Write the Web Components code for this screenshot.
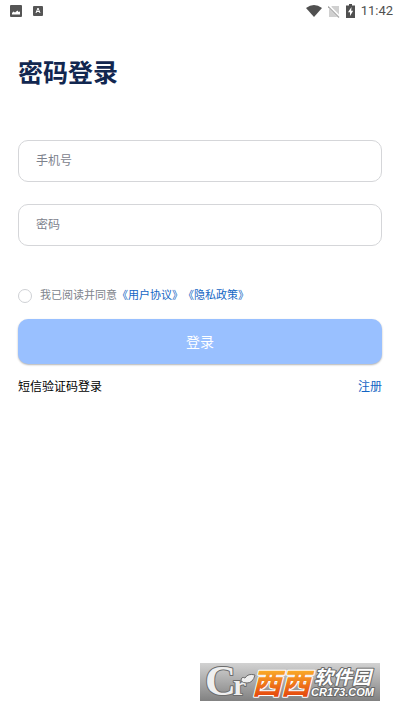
<!DOCTYPE html>
<html lang="zh-CN">
<head>
<meta charset="utf-8">
<meta name="viewport" content="width=device-width, initial-scale=1">
<title>密码登录</title>
<style>
html, body { margin: 0; height: 100%; background: #fff; font-family: Roboto, "Noto Sans CJK SC", sans-serif; }
</style>
</head>
<body>
<login-page></login-page>
<script>
const define = (name, html, setup) => customElements.define(name, class extends HTMLElement {
  constructor() {
    super();
    const t = document.createElement('template');
    t.innerHTML = '<style>*{box-sizing:border-box}</style>' + html;
    this.attachShadow({ mode: 'open' }).append(t.content.cloneNode(true));
  }
  connectedCallback() { if (setup) setup(this, this.shadowRoot); }
});

define('status-bar', `
<style>
:host { display: flex; align-items: center; justify-content: space-between; height: 22px; padding: 0 7px 0 10px; color: #505050; font-size: 13px; line-height: 16px; }
div { display: flex; align-items: center; }
.left { gap: 11px; } .right { gap: 6px; }
svg { display: block; }
</style>
<div class="left">
<svg width="12" height="12" viewBox="0 0 12 12"><rect width="12" height="12" rx="1" fill="#555"/><path d="M2 9.500V8L3.500 6.500L5 7.500L7.500 5.500L8.500 7L10 6.500V9.500Z" fill="#fff"/></svg>
<svg width="10" height="12" viewBox="0 0 10 12"><rect y="1" width="10" height="10" rx="1" fill="#555"/><path d="M3 8L5 3L7 8M3.500 6.500H6.500" fill="none" stroke="#fff"/></svg>
</div>
<div class="right">
<svg width="16" height="12" viewBox="0 0 16 12"><path d="M0 3Q8-3 16 3L8 12Z" fill="#505050"/></svg>
<svg width="12" height="13" viewBox="0 0 12 13"><path d="M4 1H11V12H1V4Z" fill="#d0d0d0"/><path d="M1 1.500L11.500 12" stroke="#fff" stroke-width="3"/><path d="M0 1.500L11 12.500" stroke="#aaa" stroke-width="1.200"/></svg>
<svg width="9" height="14" viewBox="0 0 9 14"><path d="M3 0H6V1.500H9V14H0V1.500H3Z" fill="#505050"/><path d="M5.500 3L2 8.200H4V12L7.200 6.700H5.200Z" fill="#fff"/></svg>
<span>11:42</span>
</div>`);

define('text-field', `
<style>
:host { display: block; }
input { display: block; width: 100%; height: 42px; padding: 0 17px; border: 1px solid #d5d6d9; border-radius: 10px; background: #fff; outline: 0; color: #222; font: 12px/18px Roboto, "Noto Sans CJK SC", sans-serif; }
input::placeholder { color: #7d828d; opacity: 1; }
</style>
<input>`, (host, root) => {
  const i = root.querySelector('input');
  i.type = host.getAttribute('type');
  i.placeholder = host.getAttribute('label');
  i.setAttribute('aria-label', host.getAttribute('label'));
});

define('agreement-check', `
<style>
:host { display: flex; align-items: center; font-size: 11px; line-height: 16px; color: #80848c; white-space: nowrap; }
input { appearance: none; flex: none; width: 14px; height: 14px; margin: 0 8px 0 0; border: 1px solid #cfd1d5; border-radius: 50%; }
input:checked { background: #0a5fc4; }
</style>
<input type="checkbox" id="agree"><label for="agree">我已阅读并同意</label><slot></slot>`);

define('text-link', `
<style>
a { color: #1466c4; text-decoration: none; }
:host([plain]) a { color: #000; }
</style>
<a href="#"><slot></slot></a>`);

define('primary-button', `
<style>
:host { display: block; }
button { display: block; width: 100%; height: 45px; padding: 0; border: 0; border-radius: 10px; background: #99c0ff; box-shadow: 0 1px 2px #0000004d; color: #fff; font: 14px/20px Roboto, "Noto Sans CJK SC", sans-serif; }
</style>
<button type="button"><slot></slot></button>`);

define('site-mark', `
<style>
:host { display: block; width: 180px; }
svg { display: block; width: 100%; overflow: visible; }
text { font-family: "Noto Sans CJK SC", sans-serif; font-weight: 700; font-style: italic; paint-order: stroke; stroke-linejoin: round; }
.serif { font-family: "Liberation Serif", serif; font-weight: 700; font-style: normal; }
.domain { font-family: "Liberation Sans", sans-serif; }
</style>
<svg viewBox="0 0 180 40" role="img" aria-label="西西软件园">
<defs>
<linearGradient id="bg" x2="0" y2="1"><stop stop-color="#d2d2d2"/><stop offset="1" stop-color="#818181"/></linearGradient>
<linearGradient id="or" gradientUnits="userSpaceOnUse" x1="0" y1="8" x2="0" y2="36"><stop stop-color="#fbb02a"/><stop offset="1" stop-color="#e4440c"/></linearGradient>
</defs>
<rect y="2" width="180" height="38" fill="url(#bg)"/>
<text class="serif" fill="#efefef" stroke="#6c6c6c" stroke-width="2"><tspan x="5" y="34" font-size="43">C</tspan><tspan x="33" y="34" font-size="30">r</tspan></text>
<path d="M41 20Q41 15 45 17Q48 12 55 14Q53 22 47 22Q43 22 41 20Z" fill="#efefef" stroke="#6c6c6c"/>
<text x="52" y="33" font-size="29" fill="url(#or)" stroke="#fff" stroke-width="2" style="font-weight:900">西西</text>
<text fill="#fff" stroke="#686868" stroke-width="2"><tspan x="114" y="23" font-size="19">软件园</tspan><tspan class="domain" x="111" y="35" font-size="11">CR173.COM</tspan></text>
</svg>`);

define('login-page', `
<style>
:host { display: flex; flex-direction: column; min-height: 100%; }
main { display: flex; flex-direction: column; padding: 33px 18px 0; }
h1 { margin: 0 0 47px; font-size: 25px; line-height: 38px; font-weight: 700; color: #122750; }
text-field { margin-bottom: 22px; }
agreement-check { margin: 20px 0 15px; }
nav { display: flex; justify-content: space-between; margin-top: 14px; font-size: 12px; line-height: 18px; }
footer { display: flex; justify-content: flex-end; margin-top: auto; padding: 0 20px 10px; }
</style>
<status-bar></status-bar>
<main>
<h1>密码登录</h1>
<text-field type="tel" label="手机号"></text-field>
<text-field type="password" label="密码"></text-field>
<agreement-check><text-link>《用户协议》</text-link><text-link>《隐私政策》</text-link></agreement-check>
<primary-button>登录</primary-button>
<nav><text-link plain>短信验证码登录</text-link><text-link>注册</text-link></nav>
</main>
<footer><site-mark></site-mark></footer>`);
</script>
</body>
</html>
